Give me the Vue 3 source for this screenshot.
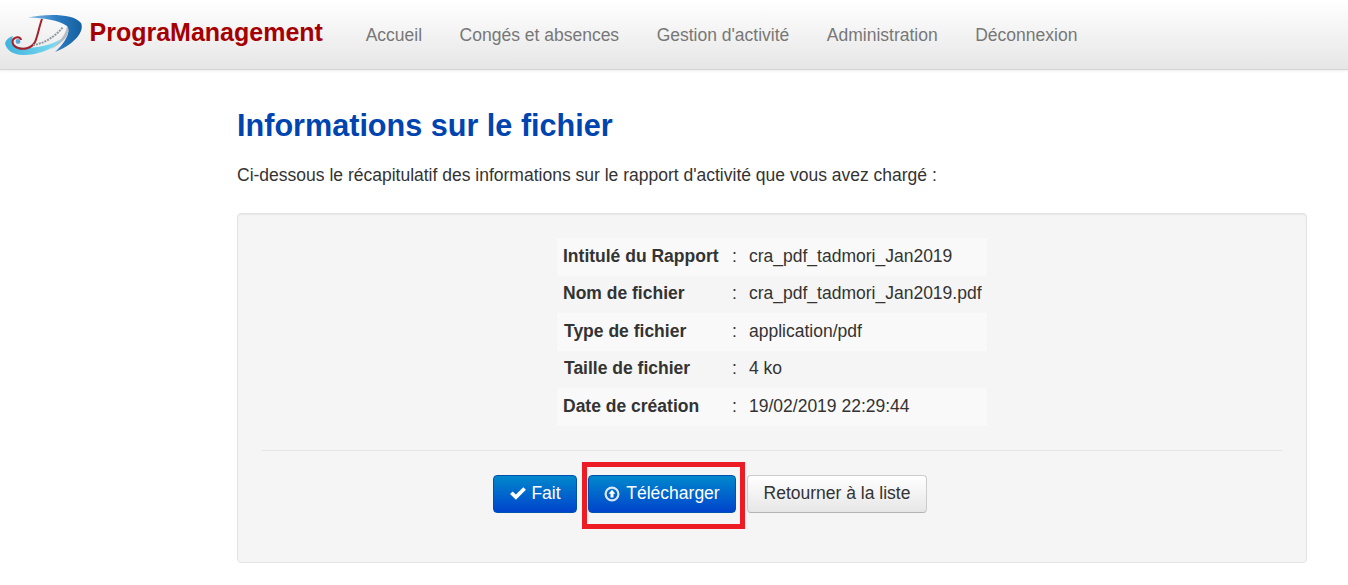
<script setup>
const links = ['Accueil', 'Congés et absences', "Gestion d'activité", 'Administration', 'Déconnexion']
const rows = [
  ['Intitulé du Rapport', 'cra_pdf_tadmori_Jan2019'],
  ['Nom de fichier', 'cra_pdf_tadmori_Jan2019.pdf'],
  ['Type de fichier', 'application/pdf'],
  ['Taille de fichier', '4 ko'],
  ['Date de création', '19/02/2019 22:29:44'],
]
</script>

<template>
  <div class="page">
    <header class="navbar">
      <svg class="logo" width="78" height="42" viewBox="0 0 78 42">
        <defs>
          <linearGradient id="blueD" x1="0" y1="0" x2="1" y2="0">
            <stop offset="0" stop-color="#8fbfe4" />
            <stop offset="0.5" stop-color="#2f7fc6" />
            <stop offset="1" stop-color="#14609f" />
          </linearGradient>
          <linearGradient id="cyanS" x1="0" y1="0" x2="1" y2="0">
            <stop offset="0" stop-color="#3fb4de" />
            <stop offset="1" stop-color="#7fdcf2" />
          </linearGradient>
        </defs>
        <path d="M23 2.5 C40 -1 68 -2 76 8 C80 17 68 30 50 37 C60 28 66 18 62 11 C54 5 38 3 23 2.5 Z" fill="url(#blueD)" />
        <path d="M62 11 C67 17 60 27 46 34 C54 27 61 20 62 11 Z" fill="#b5bcc4" />
        <path d="M0 28 C1 25 4 22 8 21 C5 27 9 32 19 33 C32 33 47 30 56 24 C50 34 33 40 18 40 C8 40 1 35 0 28 Z" fill="url(#cyanS)" />
        <path d="M37 4 C34 12 33 20 30 27 C27 33 19 35 13 33 C7 31 6 25 10 23 C13 21 16 23 16 25" fill="none" stroke="#a3222a" stroke-width="2" />
        <circle cx="13" cy="26.5" r="2.4" fill="#5aa6d8" />
        <path d="M28 30 C38 29 50 22 58 12" fill="none" stroke="#8d979e" stroke-width="2" stroke-dasharray="2 1" />
      </svg>
      <a class="brand">PrograManagement</a>
      <nav class="nav">
        <a v-for="l in links" :key="l" class="nav-link">{{ l }}</a>
      </nav>
    </header>

    <main class="content">
      <h1 class="title">Informations sur le fichier</h1>
      <p class="intro">Ci-dessous le récapitulatif des informations sur le rapport d'activité que vous avez chargé :</p>

      <section class="well">
        <table class="info">
          <tbody>
            <tr v-for="r in rows" :key="r[0]">
              <th>{{ r[0] }}</th>
              <td class="colon">:</td>
              <td>{{ r[1] }}</td>
            </tr>
          </tbody>
        </table>
        <hr class="sep" />
        <div class="actions">
          <button class="btn primary fait">
            <svg width="18" height="15" viewBox="0 0 17 14"><path d="M1 7.5 L3.5 5 L6.5 8 L13.5 1 L16 3.5 L6.5 13 Z" fill="#fff" /></svg>
            Fait
          </button>
          <span class="highlight">
            <button class="btn primary dl">
              <svg width="16" height="16" viewBox="0 0 16 16">
                <circle cx="8" cy="8" r="6.4" fill="none" stroke="#dbe8f7" stroke-width="2.2" />
                <path d="M8 3.8 L11.4 7.8 H9.5 V11.6 H6.5 V7.8 H4.6 Z" fill="#fff" />
              </svg>
              Télécharger
            </button>
          </span>
          <button class="btn light">Retourner à la liste</button>
        </div>
      </section>
    </main>
  </div>
</template>

<style>
html, body { margin: 0; background: #fff; }
</style>

<style scoped>
.page {
  font-family: "Liberation Sans", Arial, sans-serif;
  font-size: 17.5px;
  color: #333;
}
.navbar {
  height: 69px;
  display: flex;
  align-items: center;
  background: linear-gradient(to bottom, #ffffff, #e6e6e6);
  border-bottom: 1px solid #d4d4d4;
  box-shadow: 0 1px 3px rgba(0, 0, 0, 0.07);
  padding-left: 5px;
}
.logo { flex: none; margin-top: 2px; filter: blur(0.4px); }
.brand {
  margin-left: 6.5px;
  margin-top: -4px;
  font-size: 25px;
  font-weight: 700;
  color: #a50000;
  white-space: nowrap;
}
.nav { display: flex; margin-left: 24px; padding-top: 1px; }
.nav-link {
  padding: 0 18.75px;
  color: #777;
  white-space: nowrap;
}
.content {
  margin-left: 237px;
  width: 1070px;
}
.title {
  margin: 37px 0 0;
  font-size: 30.6px;
  line-height: 36px;
  font-weight: 700;
  color: #0044b0;
}
.intro {
  margin: 21px 0 0;
  line-height: 23px;
}
.well {
  margin-top: 26px;
  height: 350px;
  box-sizing: border-box;
  background: #f5f5f5;
  border: 1px solid #e3e3e3;
  border-radius: 4px;
  box-shadow: inset 0 1px 1px rgba(0, 0, 0, 0.05);
  padding: 24px 23px;
}
.info {
  width: 430px;
  margin: 0 auto;
  border-collapse: collapse;
  table-layout: fixed;
}
.info tr { height: 37.5px; }
.info tr:nth-child(odd) { background: #f9f9f9; }
.info th {
  width: 169px;
  padding: 0 0 0 6px;
  text-align: left;
  font-weight: 700;
  white-space: nowrap;
}
.info td { padding: 0; white-space: nowrap; }
.info tr:nth-child(even) th,
.info tr:nth-child(even) td { padding-bottom: 1px; }
.info tr:nth-child(3) th,
.info tr:nth-child(4) th { padding-left: 7px; }
.info .colon { width: 17px; }
.sep {
  margin: 24px 0 0;
  border: 0;
  border-top: 1px solid #e6e6e6;
}
.actions {
  margin-top: 24px;
  padding-left: 232px;
  display: flex;
  align-items: center;
  gap: 11px;
}
.btn {
  height: 38px;
  box-sizing: border-box;
  border-radius: 4px;
  font: inherit;
  white-space: nowrap;
  display: inline-flex;
  align-items: center;
  justify-content: center;
  gap: 4px;
  padding: 0;
}
.primary {
  color: #fff;
  border: 1px solid #0050b0;
  background: linear-gradient(to bottom, #0088cc, #0044cc);
}
.fait { width: 84px; }
.dl { width: 148px; gap: 6px; }
.highlight {
  display: inline-flex;
  margin: -13px -9px -16px -6px;
  padding: 8px 4px 11px 1px;
  border: 5px solid #ed1c24;
}
.light {
  width: 180px;
  color: #333;
  border: 1px solid #ccc;
  border-bottom-color: #b3b3b3;
  background: linear-gradient(to bottom, #ffffff, #e6e6e6);
}
</style>
